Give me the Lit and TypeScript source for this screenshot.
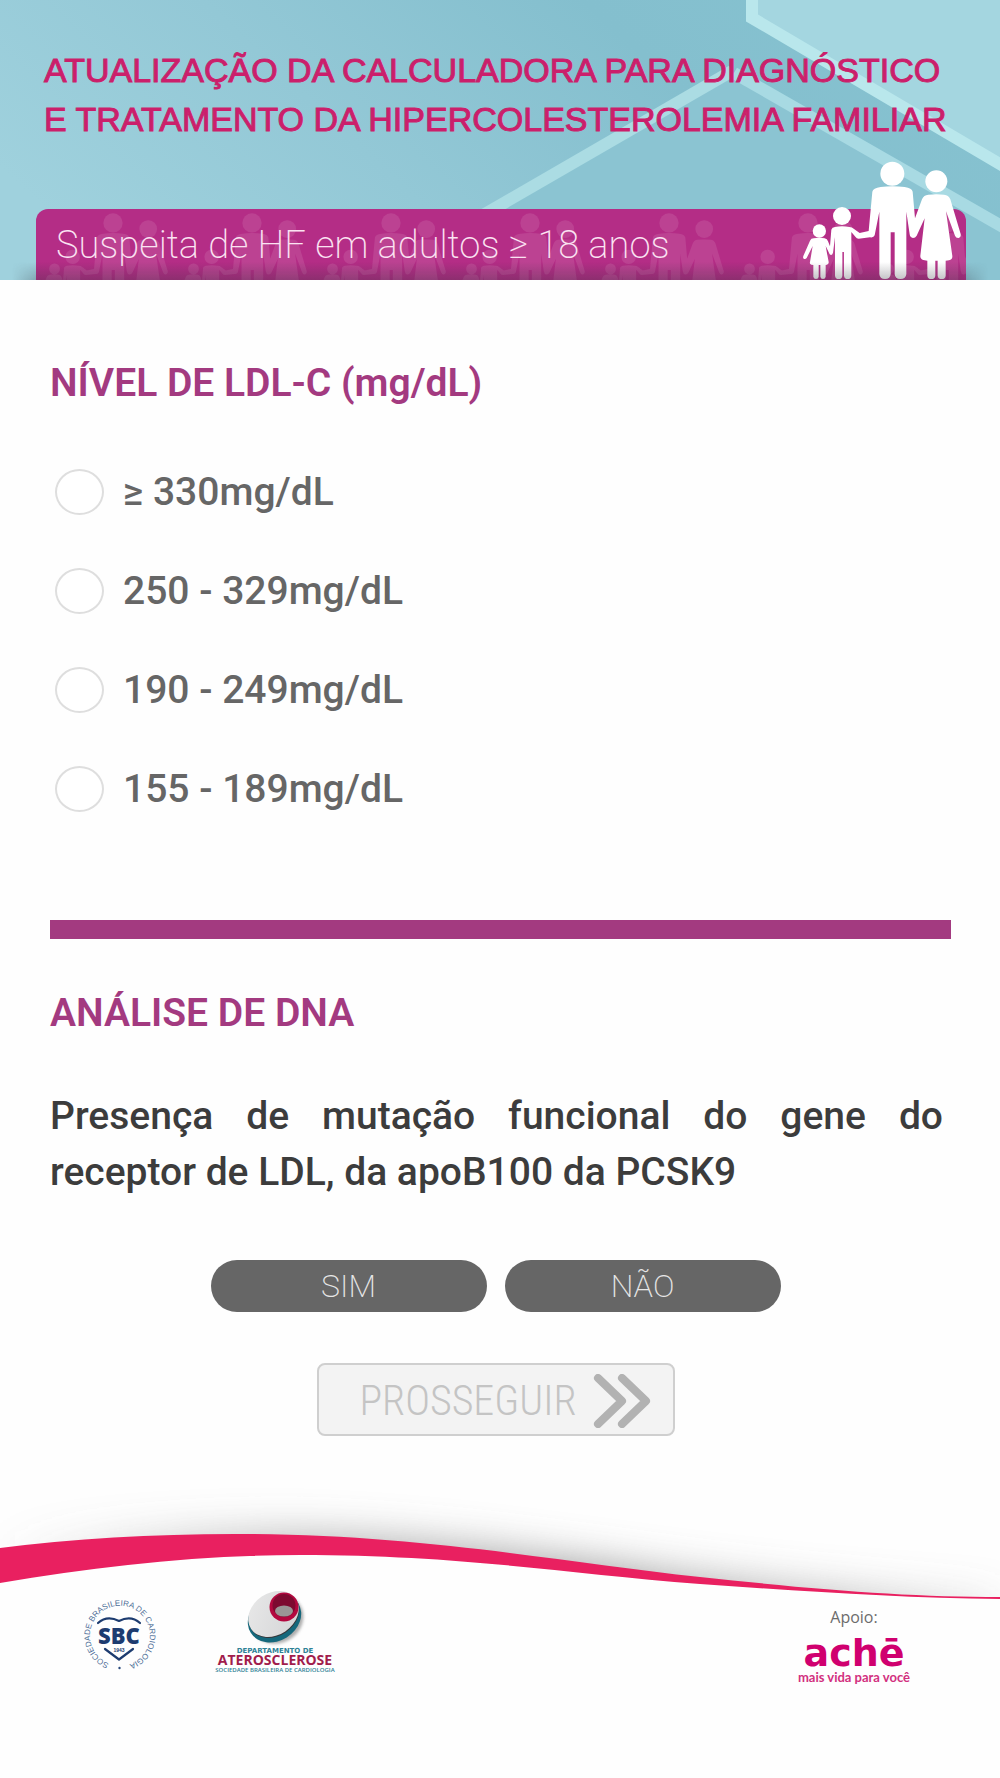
import { LitElement, html, css, svg } from "lit";
import { customElement, state } from "lit/decorators.js";

const family = svg`
  <circle cx="337" cy="71" r="36" />
  <path d="M302 111 Q337 107 374 111 Q396 114 398 125 L405 205 L426 148 Q431 135 445 134 Q469 131 492 134 Q506 135 511 148 L542 252 Q544 262 536 264 Q528 265 525 257 L498 184 L517 318 Q518 329 507 331 L497 332 V377 Q496 387 485 387 Q474 387 473 377 V332 H466 V377 Q465 387 454 387 Q443 387 442 377 V332 L430 330 Q420 327 421 317 L434 205 L410 257 Q406 264 399 264 Q390 263 389 253 L379 185 V372 Q378 387 361 387 Q345 387 344 372 V247 H332 V372 Q331 387 315 387 Q299 387 298 372 V185 L284 256 Q281 264 270 262 L236 266 Q230 266 226 260 L214 246 V377 Q213 387 203 387 Q193 387 192 377 V306 H187 V377 Q186 387 176 387 Q166 387 165 377 V262 L159 308 Q156 318 149 313 L137 288 L146 336 Q147 342 141 344 L137 345 V380 Q136 387 129 387 Q122 387 121 380 V345 H116 V380 Q115 387 108 387 Q101 387 100 380 V345 L94 344 Q88 342 90 336 L98 288 L80 324 Q76 329 71 326 Q68 323 70 318 L90 272 Q93 265 101 265 Q118 262 134 265 Q142 266 144 274 L150 289 L154 239 Q156 232 165 231 Q186 227 208 231 Q217 231 221 236 L239 249 L266 243 L277 125 Q279 114 302 111Z" />
  <circle cx="469" cy="94" r="33" />
  <circle cx="186" cy="198" r="27" />
  <circle cx="118" cy="243" r="20" />
`;

@customElement("page-header")
class PageHeader extends LitElement {
  static styles = css`
    :host {
      display: block;
      position: relative;
      overflow: hidden;
      background: #8fc6d4;
    }
    .backdrop {
      position: absolute;
      inset: 0;
      width: 100%;
      height: 100%;
    }
    .inner {
      position: relative;
      padding: 46px 34px 0 36px;
    }
    h1 {
      margin: 0 0 65px 8px;
      font: 400 34px/49px "Liberation Sans", Arial, sans-serif;
      color: #cb1f6b;
      -webkit-text-stroke: 1px #cb1f6b;
    }
    .line {
      display: block;
    }
    .banner {
      position: relative;
      box-sizing: border-box;
      height: 71px;
      padding: 0 20px;
      border-radius: 12px 12px 0 0;
      background: #b42d86;
      color: #fbe3f2;
      display: flex;
      align-items: center;
    }
    .ghosts {
      position: absolute;
      inset: 0;
      width: 100%;
      height: 100%;
    }
    h2 {
      position: relative;
      margin: 0;
      font: 200 38px/48px Roboto, sans-serif;
    }
    .family {
      position: absolute;
      right: 4px;
      bottom: 0;
      width: 160px;
      height: 119px;
    }
    .shade {
      position: absolute;
      left: 12px;
      right: 12px;
      bottom: 0;
      height: 18px;
      background: linear-gradient(to top, rgba(50, 50, 60, 0.3), rgba(50, 50, 60, 0));
      -webkit-mask-image: linear-gradient(to right, transparent, #000 28px calc(100% - 28px), transparent);
      mask-image: linear-gradient(to right, transparent, #000 28px calc(100% - 28px), transparent);
    }
  `;

  render() {
    return html`
      <svg class="backdrop" viewBox="0 0 1000 280" preserveAspectRatio="none" aria-hidden="true">
        <defs>
          <linearGradient id="sky" x1="0" y1="0.6" x2="1" y2="0.3">
            <stop offset="0" stop-color="#9fd1dd" />
            <stop offset="0.35" stop-color="#93c8d6" />
            <stop offset="0.7" stop-color="#84bfce" />
            <stop offset="1" stop-color="#86c2d0" />
          </linearGradient>
        </defs>
        <rect width="1000" height="280" fill="url(#sky)" />
        <path d="M440 240 L732 71 L1000 225 V280 H440Z" fill="#8bc4d2" />
        <path d="M440 240 L732 71" stroke="#abdce3" stroke-width="12" fill="none" />
        <path d="M734 73 L1010 231" stroke="#a8dae3" stroke-width="12" fill="none" />
        <path d="M752 -10 V18 L1010 170 V-10Z" fill="#a4d6e0" stroke="#b9e7ec" stroke-width="12" />
      </svg>
      <div class="inner">
        <h1>
          <span class="line">ATUALIZAÇÃO DA CALCULADORA PARA DIAGNÓSTICO</span>
          <span class="line">E TRATAMENTO DA HIPERCOLESTEROLEMIA FAMILIAR</span>
        </h1>
        <div class="banner">
          <svg class="ghosts" aria-hidden="true">
            <defs>
              <pattern id="people" width="139" height="110" patternUnits="userSpaceOnUse">
                <g transform="translate(-13 -5) scale(0.267)" fill="#fff" fill-opacity="0.1">${family}</g>
              </pattern>
            </defs>
            <rect width="100%" height="100%" fill="url(#people)" />
          </svg>
          <h2>Suspeita de HF em adultos ≥ 18 anos</h2>
          <svg class="family" viewBox="66 33 480 357" fill="#fff" aria-hidden="true">${family}</svg>
        </div>
      </div>
      <div class="shade"></div>
    `;
  }
}

@customElement("page-footer")
class PageFooter extends LitElement {
  static styles = css`
    :host {
      display: block;
      font-family: "Open Sans", sans-serif;
    }
    .wave {
      display: block;
      width: 100%;
      height: 120px;
    }
    .logos {
      display: flex;
      align-items: flex-start;
      padding: 0 80px 0 72px;
      margin-top: -20px;
    }
    .sbc {
      width: 94px;
      height: 96px;
    }
    .atero {
      width: 130px;
      height: 90px;
      margin-left: 44px;
      margin-top: 6px;
    }
    .sponsor {
      margin-left: auto;
      width: 132px;
      text-align: center;
      color: #6c6c6c;
      font: 500 16px/20px "Open Sans", sans-serif;
      padding-top: 27px;
    }
    .brand {
      display: block;
      font: 700 38px/32px "DejaVu Sans", sans-serif;
      color: #d0006f;
      margin-top: 10px;
    }
    .motto {
      display: block;
      font: 700 13px/16px Lato, sans-serif;
      color: #d2307f;
    }
  `;

  render() {
    return html`
      <svg class="wave" viewBox="0 1480 1000 120" preserveAspectRatio="none" aria-hidden="true">
        <defs>
          <filter id="soft" x="-20%" y="-60%" width="140%" height="220%">
            <feGaussianBlur stdDeviation="20" />
          </filter>
          <linearGradient id="fade" x1="0" x2="1000" y1="0" y2="0" gradientUnits="userSpaceOnUse">
            <stop offset="0" stop-color="#777" stop-opacity="0" />
            <stop offset="0.3" stop-color="#777" stop-opacity="0.55" />
            <stop offset="0.6" stop-color="#777" stop-opacity="0.75" />
            <stop offset="0.85" stop-color="#777" stop-opacity="0.45" />
            <stop offset="1" stop-color="#777" stop-opacity="0.12" />
          </linearGradient>
        </defs>
        <path
          d="M0 1548 Q110 1534 235 1534 C420 1534 560 1562 700 1578 C820 1592 910 1597 1000 1598 V1680 H0Z"
          fill="url(#fade)"
          filter="url(#soft)"
        />
        <path d="M0 1570 Q160 1545 300 1545 C440 1545 540 1565 700 1581 C830 1593 910 1598 1000 1598 V1610 H0Z" fill="#fefefe" />
        <path
          d="M0 1548 Q110 1534 235 1534 C420 1534 560 1562 700 1577 C820 1590 910 1597 1000 1597 V1599 C900 1598 800 1591 700 1584 C560 1573 460 1555 300 1555 C200 1555 100 1566 0 1583Z"
          fill="#e92060"
        />
      </svg>
      <div class="logos">
        <svg class="sbc" viewBox="72 1581 94 96" role="img" aria-label="SBC">
          <defs>
            <path id="ring" d="M109 1664.600 A30 30 0 1 1 131 1664.600" />
          </defs>
          <text font-family="Liberation Sans, sans-serif" font-size="8" fill="#4d6d96">
            <textPath href="#ring">SOCIEDADE BRASILEIRA DE CARDIOLOGIA</textPath>
          </text>
          <circle cx="119.500" cy="1669" r="1.200" fill="#2a4a7c" />
          <g fill="none" stroke="#1d3c70" stroke-width="2.200" stroke-linecap="round" stroke-linejoin="round">
            <path d="M98 1624 Q107 1616 119 1622 Q131 1616 140 1624" />
            <path d="M105 1650 L119 1660.500 L133 1650" />
          </g>
          <text x="119" y="1645" text-anchor="middle" font-family="Open Sans, sans-serif" font-weight="800" font-size="22" fill="#1d3c70">SBC</text>
          <text x="119" y="1653" text-anchor="middle" font-family="Liberation Sans, sans-serif" font-weight="700" font-size="5" fill="#1d3c70">1943</text>
        </svg>
        <svg class="atero" viewBox="210 1586 130 90" role="img" aria-label="Departamento de Aterosclerose">
          <defs>
            <linearGradient id="disc" x1="0" y1="0" x2="1" y2="1">
              <stop offset="0" stop-color="#e9e9e9" />
              <stop offset="1" stop-color="#d2d3d5" />
            </linearGradient>
            <filter id="drop" x="-20%" y="-20%" width="150%" height="150%">
              <feGaussianBlur stdDeviation="1.500" />
            </filter>
          </defs>
          <ellipse cx="277" cy="1619" rx="27" ry="24" transform="rotate(-28 277 1619)" fill="#777" opacity="0.6" filter="url(#drop)" />
          <ellipse cx="274.500" cy="1618" rx="28" ry="23" transform="rotate(-32 274.500 1618)" fill="#15687c" />
          <ellipse cx="274" cy="1615" rx="27" ry="21" transform="rotate(-34 274 1615)" fill="#35383c" />
          <ellipse cx="273.500" cy="1614" rx="27" ry="21" transform="rotate(-34 273.500 1614)" fill="url(#disc)" />
          <circle cx="284" cy="1607" r="14.500" fill="#b3083f" />
          <circle cx="284" cy="1605.500" r="11.500" fill="#7d0a30" />
          <ellipse cx="284" cy="1611" rx="9" ry="5.500" fill="#9a9696" />
          <g text-anchor="middle">
            <text x="275" y="1653" font-family="DejaVu Sans, sans-serif" font-weight="700" font-size="7" fill="#2f8296">DEPARTAMENTO DE</text>
            <text x="275" y="1665" font-family="Open Sans, sans-serif" font-weight="700" font-size="14" fill="#a11d4c">ATEROSCLEROSE</text>
            <text x="275" y="1672" font-family="Open Sans, sans-serif" font-weight="600" font-size="6" fill="#2f8296">SOCIEDADE BRASILEIRA DE CARDIOLOGIA</text>
          </g>
        </svg>
        <div class="sponsor">
          Apoio:
          <span class="brand">achē</span>
          <span class="motto">mais vida para você</span>
        </div>
      </div>
    `;
  }
}

@customElement("app-root")
class AppRoot extends LitElement {
  static styles = css`
    :host {
      display: block;
      min-height: 100vh;
      background: #fefefe;
      font-family: Roboto, "Liberation Sans", sans-serif;
    }
    main {
      padding: 78px 49px 0 50px;
    }
    .title {
      margin: 0;
      padding: 0;
      font-size: 39px;
      font-weight: 600;
      line-height: 50px;
      color: #a33a80;
    }
    fieldset {
      margin: 0;
      padding: 0;
      border: 0;
      min-width: 0;
    }
    .options {
      display: grid;
      gap: 49px;
      padding: 59px 0 0 5px;
    }
    .option {
      display: flex;
      align-items: center;
      gap: 19px;
      height: 50px;
      font-size: 39px;
      font-weight: 500;
      line-height: 50px;
      color: #666;
    }
    .radio {
      appearance: none;
      flex: none;
      box-sizing: border-box;
      width: 49px;
      height: 46px;
      margin: 0;
      border: 2px solid #dedede;
      border-radius: 50%;
      background: #fff;
    }
    .radio:checked {
      background: #a33a80;
      box-shadow: inset 0 0 0 8px #fff;
    }
    hr {
      height: 19px;
      margin: 106px 0 49px;
      border: 0;
      background: #a33a80;
    }
    .question {
      margin: 50px 8px 0 0;
      font-size: 39px;
      font-weight: 500;
      line-height: 56px;
      color: #3c3c3c;
      text-align: justify;
    }
    .answers {
      display: flex;
      justify-content: center;
      gap: 18px;
      padding: 60px 10px 0 0;
    }
    .answer {
      width: 276px;
      height: 52px;
      padding: 0;
      border: 0;
      border-radius: 26px;
      background: #666;
      color: #e6e6e6;
      font: 200 32px/50px Roboto, sans-serif;
    }
    .answer[aria-pressed="true"] {
      background: #a33a80;
    }
    .actions {
      display: flex;
      justify-content: center;
      padding: 51px 10px 0 0;
    }
    .next {
      display: flex;
      align-items: center;
      justify-content: flex-end;
      gap: 16px;
      width: 358px;
      height: 73px;
      box-sizing: border-box;
      padding: 2px 22px 0 0;
      border: 2px solid #cfcfcf;
      border-radius: 8px;
      background: #f3f3f3;
      color: #c4c4c4;
      font: 300 42px/68px "Roboto Condensed", Roboto, sans-serif;
    }
    .chevrons {
      width: 58px;
      height: 54px;
    }
    page-footer {
      margin-top: 44px;
    }
  `;

  @state() private level = "";
  @state() private dna = "";

  private levels = ["≥ 330mg/dL", "250 - 329mg/dL", "190 - 249mg/dL", "155 - 189mg/dL"];

  render() {
    return html`
      <page-header></page-header>
      <main>
        <fieldset>
          <legend class="title">NÍVEL DE LDL-C (mg/dL)</legend>
          <div class="options">
            ${this.levels.map(
              (label, i) => html`
                <label class="option" for="level-${i}">
                  <input
                    class="radio"
                    type="radio"
                    name="level"
                    id="level-${i}"
                    .checked=${this.level === label}
                    @change=${() => (this.level = label)}
                  />
                  ${label}
                </label>
              `
            )}
          </div>
        </fieldset>
        <hr />
        <h2 class="title">ANÁLISE DE DNA</h2>
        <p class="question">Presença de mutação funcional do gene do receptor de LDL, da apoB100 da PCSK9</p>
        <div class="answers">
          ${["SIM", "NÃO"].map(
            (label) => html`
              <button
                class="answer"
                type="button"
                aria-pressed=${this.dna === label ? "true" : "false"}
                @click=${() => (this.dna = label)}
              >${label}</button>
            `
          )}
        </div>
        <div class="actions">
          <button class="next" type="button" ?disabled=${!this.level || !this.dna}>
            PROSSEGUIR
            <svg class="chevrons" viewBox="0 0 58 54" fill="none" stroke="#b2b2b2" stroke-width="8" stroke-linecap="round" stroke-linejoin="round" aria-hidden="true">
              <path d="M5 4 L29 27 L5 50 M29 4 L53 27 L29 50" />
            </svg>
          </button>
        </div>
      </main>
      <page-footer></page-footer>
    `;
  }
}
